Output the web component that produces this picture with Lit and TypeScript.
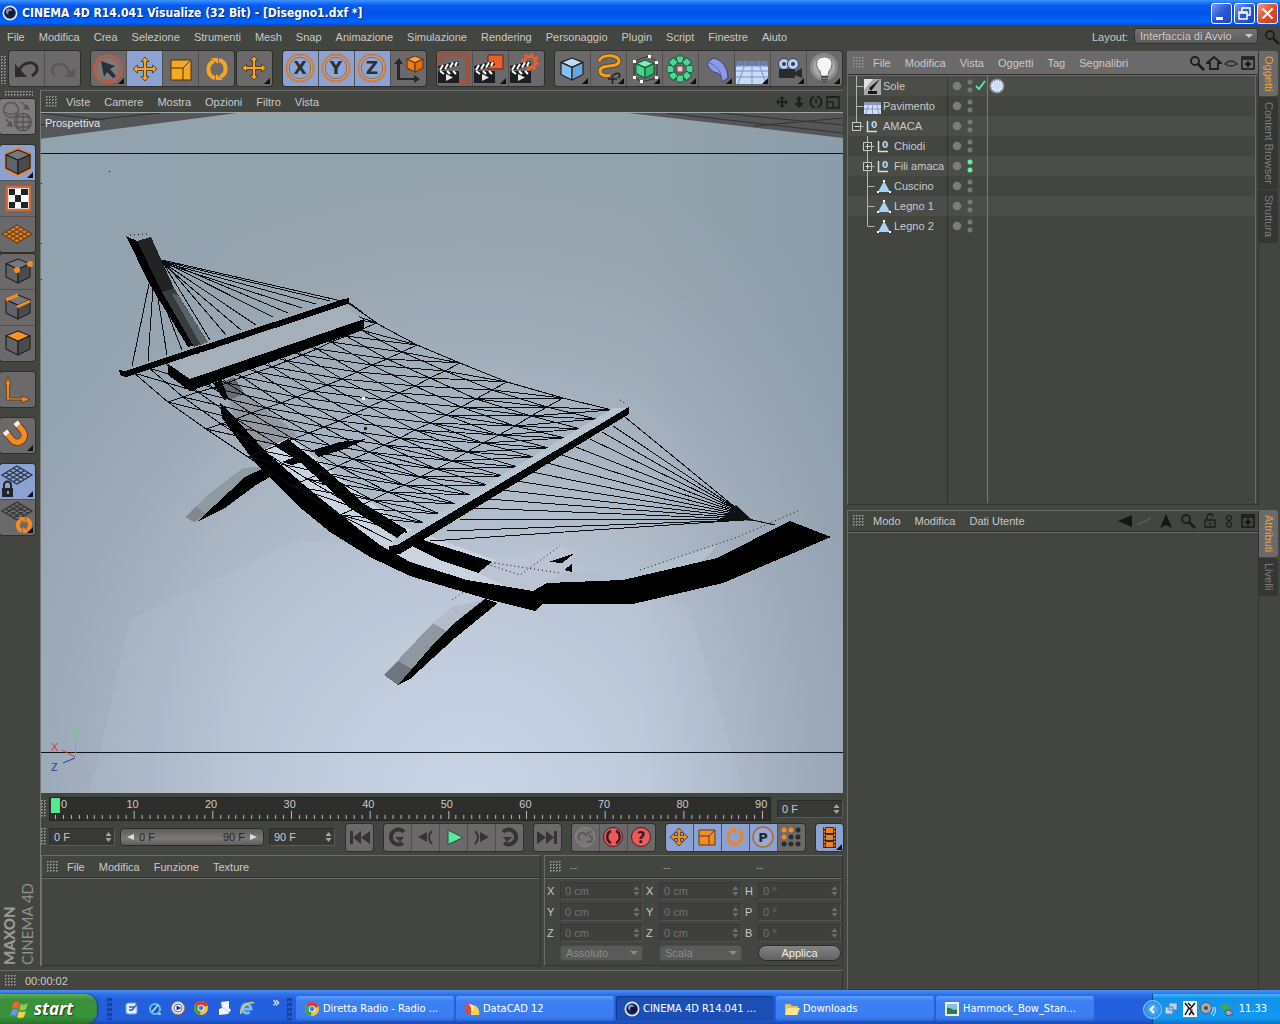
import { LitElement, html, svg, css, TemplateResult } from "lit";
import { customElement } from "lit/decorators.js";
import { classMap } from "lit/directives/class-map.js";

type Art = TemplateResult;
interface Tool { label: string; art: Art; on?: boolean; more?: boolean; }

const icon = (w: number, h: number, art: Art) =>
  html`<svg class="icon" width=${w} height=${h} viewBox="0 0 ${w} ${h}" aria-hidden="true">${art}</svg>`;

/* ---------- shared glyph parts ---------- */
const cube = (x: number, y: number, s: number, top: string, left: string, right: string, line = "#222") => svg`
  <g stroke=${line} stroke-width="1.2" stroke-linejoin="round">
    <path fill=${top} d="M${x} ${y - s}l${s} ${s * 0.4}l${-s} ${s * 0.45}l${-s} ${-s * 0.45}z"/>
    <path fill=${left} d="M${x - s} ${y - s * 0.6}l${s} ${s * 0.45}v${s * 1.15}l${-s} ${-s * 0.5}z"/>
    <path fill=${right} d="M${x + s} ${y - s * 0.6}l${-s} ${s * 0.45}v${s * 1.15}l${s} ${-s * 0.5}z"/>
  </g>`;
const cross = (c: number, r: number, fill: string) => svg`
  <path transform="translate(${c} ${c})" fill=${fill} stroke="#3a3020" stroke-width=".8"
    d="M0 ${-r}l4 4.5h-2.5v${r - 6}h${r - 6}v-2.5l4.5 4l-4.5 4v-2.5h${6 - r}v${r - 6}h2.5l-4 4.5l-4 -4.5h2.5v${6 - r}h${6 - r}v2.5l-4.5 -4l4.5 -4v2.5h${r - 6}v${6 - r}h-2.5z"/>`;
const spin = (c: number, r: number, color: string, w: number) => svg`
  <g fill="none" stroke=${color} stroke-width=${w}>
    <path d="M${c - 2} ${c + r}A${r} ${r} 0 0 1 ${c - 3} ${c - r + 1}"/>
    <path d="M${c + 2} ${c - r}A${r} ${r} 0 0 1 ${c + 3} ${c + r - 1}"/>
  </g>
  <path fill=${color} d="M${c - 6} ${c - r - 2}h7v6zM${c + 6} ${c + r + 2}h-7v-6z"/>`;
const axisRing = (t: string) => svg`
  <circle cx="17" cy="17" r="13.5" fill="#9aa9cf" stroke="#d9792a" stroke-width="2"/>
  <circle cx="17" cy="17" r="10.8" fill="#8fa5d3" stroke="#a5652f" stroke-width="1"/>
  <text x="17" y="23" text-anchor="middle" font-family="DejaVu Sans" font-weight="700" font-size="17" fill="#2b3035">${t}</text>`;
const clapper = svg`
  <path fill="#1d1d1f" d="M1 20h21v12h-21z"/>
  <path fill="#1d1d1f" d="M1 15l20 -5l1 4l-20 6z"/>
  <path stroke="#fff" stroke-width="2" d="M3 19l3 -5M8 18l3 -5M13 16.500l3 -5M18 15l2 -4M3 20l4 3M10 20l3 3M16 20l3 3"/>
  <path fill="#e8e8e8" d="M9 23l7 3.500l-7 3.500z"/>`;
const gridPlane = (y: number, color: string) => svg`
  <g stroke=${color} fill="none" stroke-width="1.300">
    <path d="M17 ${y - 9}l15 9l-15 9l-15 -9z"/>
    <path d="M13.200 ${y - 6.700}l15 9M9.500 ${y - 4.500}l15 9M5.700 ${y - 2.200}l15 9M20.700 ${y - 6.700}l-15 9M24.500 ${y - 4.500}l-15 9M28.200 ${y - 2.200}l-15 9"/>
  </g>`;
const corner = svg`<path fill="#111" d="M33 27v6h-6z"/>`;

/* ---------- tool groups ---------- */
const topGroups: { near?: boolean; tools: Tool[] }[] = [
  { tools: [
    { label: "Annulla", art: svg`<path fill="none" stroke="#2c2c2d" stroke-width="3" d="M10 20C13 10 28 9 28 18c0 3-2 5-5 7"/><path fill="#2c2c2d" d="M6 13v13h12z"/>` },
    { label: "Ripeti", art: svg`<path fill="none" stroke="#5a5858" stroke-width="2.500" d="M10 24c-5-3-4-11 5-11c6 0 8 4 9 9"/><path fill="#5a5858" d="M30 26H18l12-9z"/>` },
  ] },
  { tools: [
    { label: "Selezione", more: true, art: svg`<circle cx="17" cy="18" r="14" fill="#777475" stroke="#d0553a" stroke-width="1.500"/><circle cx="17" cy="18" r="11.500" fill="#7c797a" stroke="#c2523b"/><path fill="#2c2f35" d="M10 10l14 5l-5 3l6 7l-3 2l-6-6l-3 5z"/>` },
    { label: "Muovi", on: true, art: cross(18, 12, "#f5a623") },
    { label: "Scala", art: svg`<path fill="#f6a81f" stroke="#4b3414" d="M8 9h20v20h-20z"/><path stroke="#4b3414" fill="none" d="M8 17h12v12M20 17l7-7"/>` },
    { label: "Ruota", art: spin(18, 9, "#f5a623", 4) },
  ] },
  { near: true, tools: [{ label: "Ultimo strumento", more: true, art: cross(17, 12, "#f5a623") }] },
  { tools: [
    { label: "Blocca X", on: true, art: axisRing("X") },
    { label: "Blocca Y", on: true, art: axisRing("Y") },
    { label: "Blocca Z", on: true, art: axisRing("Z") },
    { label: "Coordinate", art: svg`<path fill="#28282a" d="M8 7l4 6h-3v14h14v-3l6 4l-6 4v-3H6V13H3z"/>${cube(24, 13, 8, "#f7a24e", "#ee7b1c", "#e06d10", "#6c3a10")}` },
  ] },
  { tools: [
    { label: "Render vista", art: svg`<path fill="none" stroke="#b04a30" stroke-width="1.500" d="M2 14V2h30v30h-9M29 5v24h-6M29 5H5v8"/>${clapper}` },
    { label: "Render immagine", more: true, art: svg`<path fill="#e8602c" stroke="#5a2a16" d="M15 4h15v14h-15z"/>${clapper}` },
    { label: "Opzioni render", art: svg`<circle cx="21" cy="11" r="5.500" fill="none" stroke="#e8602c" stroke-width="3"/><circle cx="21" cy="11" r="7.500" fill="none" stroke="#e8602c" stroke-width="3" stroke-dasharray="3 2.890"/>${clapper}` },
  ] },
  { tools: [
    { label: "Cubo", more: true, art: cube(17, 18, 11, "#b9dcfb", "#86c0f2", "#68a5dd") },
    { label: "Spline", more: true, art: svg`<path fill="none" stroke="#5a3a10" stroke-width="4.500" d="M8 10c4-8 20-6 20 0c0 8-19 2-19 10c0 4 6 6 10 4"/><path fill="none" stroke="#f2a020" stroke-width="3" d="M8 10c4-8 20-6 20 0c0 8-19 2-19 10c0 4 6 6 10 4"/><path fill="none" stroke="#222" stroke-width="1.500" d="M17 28h9M21.500 24v9M22 24c6-4 9 0 5 3"/>` },
    { label: "NURBS", more: true, art: svg`<path fill="none" stroke="#333" d="M7 10l15-5l8 6v16l-16 4l-7-6z"/>${cube(18, 18, 9, "#7cf0b4", "#46d78c", "#37be78", "#1e5c3c")}<path fill="#fff" d="M6 9h3v3h-3zM21 4h3v3h-3zM28 10h3v3h-3zM6 25h3v3h-3zM13 29h3v3h-3zM28 25h3v3h-3z"/>` },
    { label: "Array", more: true, art: svg`<g fill="#4fd592" stroke="#1e5c3c">${[0, 45, 90, 135, 180, 225, 270, 315].map(a => svg`<rect transform="rotate(${a} 17 18)" x="13.500" y="5" width="7" height="7" rx="1.500"/>`)}</g><rect x="14" y="15" width="6" height="6" fill="#e6c9c5" stroke="#644"/>` },
    { label: "Deformatori", more: true, art: svg`<path fill="#8f98e8" stroke="#3b3f70" d="M8 12l6-5c8 1 15 9 15 20l-6 4c0-5-2-8-5-9c-5-1-9-5-10-10z"/><path fill="none" stroke="#5c62a8" d="M8 12c8 0 15 8 15 19"/>` },
    { label: "Ambiente", more: true, art: svg`<path fill="#6a7aa5" d="M1 10h32v6H1z"/><path fill="#c9dbfa" d="M1 15h32v18H1z"/><path stroke="#7f93bd" d="M17 10v23M11 10L3 33M23 10l8 23M6 10L1 16M28 10l5 6M1 15h32M1 20h32M1 26h32"/>` },
    { label: "Camera", more: true, art: svg`<circle cx="13" cy="13" r="5.500" fill="#b9cef6" stroke="#333b52"/><circle cx="22" cy="13" r="5.500" fill="#b9cef6" stroke="#333b52"/><circle cx="13" cy="13" r="2" fill="#333b52"/><circle cx="22" cy="13" r="2" fill="#333b52"/><path fill="#2a2a2c" d="M8 18h16v3l7-4v10l-7-3v3H8z"/>` },
    { label: "Luce", more: true, art: svg`<circle cx="17" cy="16" r="14" fill="#8a8888"/><circle cx="17" cy="16" r="11" fill="#a8a6a6"/><path fill="#f6f6f6" stroke="#555" stroke-width=".800" d="M17 6c10 0 9 10 5 14l-1 5h-7l-1-5c-5-4-5-14 4-14z"/><path fill="#4c4c4c" d="M14 25h7v2h-7zM14 28h7v1.500h-7zM15.500 30h4v1.500h-4z"/>` },
  ] },
];

const solid: [string, string, string] = ["#76777a", "#626366", "#4a4b4e"];
const leftGroups: { near?: boolean; tools: Tool[] }[] = [
  { tools: [{ label: "Rendi modificabile", art: svg`<path fill="#7d7b7c" d="M0 0h35v35H0z"/><g fill="none" stroke="#555454" stroke-width="1.300"><circle cx="11" cy="11" r="7.500"/><path d="M4 13c5 3 10 3 14 0M21 3l7 6M6 20l5 6"/><circle cx="23" cy="23" r="8.500"/><path d="M15 23h17M23 15v17M16 18h14M16 28h14M19 16c-3 4-3 10 0 14M27 16c3 4 3 10 0 14"/></g><path fill="#555454" d="M30 11l-7-1l4-5zM13 28l-7-1l5-5z"/>` }] },
  { tools: [
    { label: "Modello", on: true, more: true, art: svg`<path fill="none" stroke="#e8842a" stroke-width="3" d="M18 4l12 5v15l-12 6l-12-6V9z"/>${cube(18, 17, 12, ...solid)}` },
    { label: "Texture", art: svg`<path fill="#d7d7d7" stroke="#d9692a" stroke-width="2" d="M7 6h23v23H7z"/><path fill="#222" d="M9 8h6v6H9zM21 8h7v6h-7zM15 14h6v7h-6zM9 21h6v6H9zM21 21h7v6h-7z"/><path fill="#fff" d="M15 8h6v6h-6zM9 14h6v7H9zM21 14h7v7h-7zM15 21h6v6h-6z"/>` },
    { label: "Piano di lavoro", art: svg`<path fill="#e0812a" d="M17 8l15 9l-15 9l-15-9z"/>${gridPlane(17, "#6e3f16")}` },
  ] },
  { near: true, tools: [
    { label: "Punti", art: svg`${cube(18, 17, 12, ...solid)}<circle cx="17" cy="16" r="3" fill="#f28c26"/><circle cx="30" cy="10" r="3" fill="#f28c26"/>` },
    { label: "Bordi", art: svg`${cube(18, 17, 12, ...solid)}<path stroke="#f28c26" stroke-width="3" d="M6 10l12-5M17 17l13-6"/>` },
    { label: "Poligoni", art: cube(18, 17, 12, "#fb9224", solid[1], solid[2]) },
  ] },
  { tools: [{ label: "Assi", art: svg`<path fill="#ea8a2c" stroke="#5e3a18" stroke-width=".800" d="M8 5l3 8H9.500v13H22v-2l8 3l-8 4v-3H6.500V13H5z"/>` }] },
  { tools: [{ label: "Snap", more: true, art: svg`<g fill="none" transform="rotate(-40 18 18)"><path stroke="#5e3515" stroke-width="7" d="M11 8v9a7 7 0 0 0 14 0V8"/><path stroke="#f28c26" stroke-width="5.500" d="M11 8v9a7 7 0 0 0 14 0V8"/><path stroke="#f2f2f2" stroke-width="5.500" d="M11 6v4M25 6v4"/></g>` }] },
  { tools: [
    { label: "Blocca piano", on: true, more: true, art: svg`${gridPlane(11, "#2b3346")}<path fill="#20242c" d="M2 24h11v9H2z"/><path fill="none" stroke="#20242c" stroke-width="2" d="M4 24v-3a3.500 3.500 0 0 1 7 0v3"/><path fill="#8fa5d3" d="M7 27h2v3h-2z"/>` },
    { label: "Piano automatico", more: true, art: svg`${gridPlane(11, "#333")}<g transform="translate(6 7)">${spin(18, 6, "#f28c26", 4)}</g>` },
  ] },
];

const keyBack = svg`<path fill="#343435" d="M4 7h3v13H4zM15 7v13L7 13.500zM24 7v13l-9-6.500z"/>`;
const keyNext = svg`<path fill="#343435" d="M23 7h-3v13h3zM12 7v13l8-6.500zM3 7v13l9-6.500z"/>`;
const playGroups: Tool[][] = [
  [{ label: "Vai all'inizio", art: keyBack }],
  [
    { label: "Chiave precedente", art: svg`<path fill="none" stroke="#343435" stroke-width="4" d="M20 8a7.500 7.500 0 1 0-1 11"/><path fill="#343435" d="M11 13h9l-4 5z"/>` },
    { label: "Fotogramma precedente", art: svg`<path fill="#343435" d="M6 13l9-5v10z"/><path fill="none" stroke="#343435" stroke-width="2" d="M20 7c-4 4-4 9 0 13"/>` },
    { label: "Riproduci", art: svg`<path fill="#56eb9c" stroke="#2a4a38" d="M8 6l15 7.500l-15 7z"/>` },
    { label: "Fotogramma successivo", art: svg`<path fill="#343435" d="M21 13l-9-5v10z"/><path fill="none" stroke="#343435" stroke-width="2" d="M7 7c4 4 4 9 0 13"/>` },
    { label: "Chiave successiva", art: svg`<path fill="none" stroke="#343435" stroke-width="4" d="M7 8a7.500 7.500 0 1 1 1 11"/><path fill="#343435" d="M16 13H7l4 5z"/>` },
  ],
  [{ label: "Vai alla fine", art: keyNext }],
  [
    { label: "Registra", art: svg`<circle cx="13" cy="13" r="9.500" fill="#777576" stroke="#8c8a8a"/><path fill="none" stroke="#5b595a" stroke-width="2" d="M8 16a4 4 0 1 1 6-5l5-4M15 17a3 3 0 1 0 2-5"/>` },
    { label: "Autokey", art: svg`<circle cx="13" cy="13" r="9.500" fill="#ee5a5c" stroke="#3a2222"/><path fill="none" stroke="#3a1a1c" stroke-width="2.500" d="M11 7c-5 2-5 10 0 12M16 7c5 2 5 10 0 12"/>` },
    { label: "Aiuto chiavi", art: svg`<circle cx="13" cy="13" r="9.500" fill="#ee5a5c" stroke="#3a2222"/><text x="13" y="19" text-anchor="middle" font-family="DejaVu Sans" font-weight="700" font-size="15" fill="#3a1a1c">?</text>` },
  ],
  [
    { label: "Posizione", on: true, art: cross(13, 9, "#f28c26") },
    { label: "Scala chiave", on: true, art: svg`<path fill="#f28c26" stroke="#5e3a18" d="M5 6h16v15H5z"/><path fill="none" stroke="#5e3a18" d="M5 12h10v9M15 12l6-6"/>` },
    { label: "Rotazione", on: true, art: spin(13, 7, "#e8852c", 3) },
    { label: "Parametro", on: true, art: svg`<circle cx="13" cy="13" r="10" fill="#9aa9cf" stroke="#b0692f" stroke-width="1.500"/><text x="13" y="18" text-anchor="middle" font-family="DejaVu Sans" font-weight="700" font-size="13" fill="#23262c">P</text>` },
    { label: "Punti chiave", art: svg`${[5, 12, 19].map((y, r) => [5, 12, 19].map((x, c) => svg`<circle cx=${x + 1} cy=${y + 1} r="2.500" fill=${r + c < 2 ? "#f28c26" : "#2c2c2d"}/>`))}` },
  ],
];
const film: Tool = { label: "Anteprima", on: true, art: svg`<path fill="#3a2a1c" d="M7 3h13v21H7z"/><path fill="#e8852c" d="M10 4h7v5h-7zM10 11h7v5h-7zM10 18h7v5h-7z"/><path stroke="#e8852c" stroke-width="1.500" stroke-dasharray="2 1.500" d="M8.500 3v21M18.500 3v21"/><path fill="#111" d="M26 20v6h-6z"/>` };

/* ---------- small header glyphs, 16 x 16 ---------- */
const lens = svg`<circle cx="6" cy="6" r="4" fill="none" stroke="#1d1d1d" stroke-width="1.800"/><path stroke="#1d1d1d" stroke-width="2.500" d="M9 9l6 6"/>`;
const house = svg`<path fill="none" stroke="#1d1d1d" stroke-width="1.800" d="M1 8l7-6l7 6h-3v6H4V8z"/>`;
const eye = svg`<path fill="none" stroke="#2a2a2a" stroke-width="1.300" d="M2 9q6-6 12 0q-6 4-12 0z"/>`;
const plusBox = svg`<path fill="none" stroke="#161616" stroke-width="1.400" d="M2 2h12v12H2zM2 4h12"/><path stroke="#161616" stroke-width="2" d="M8 6v6M5 9h6"/>`;
const viewGlyphs: [string, Art][] = [
  ["Sposta vista", svg`<path fill="#1f1f1f" d="M8 2l3 3H9v2h2V5l3 3l-3 3V9H9v2h2l-3 3l-3-3h2V9H5v2L2 8l3-3v2h2V5H5z"/>`],
  ["Zoom vista", svg`<path fill="#1f1f1f" d="M8 2l3 3H9.500v4H13l-5 5l-5-5h3.500V5H5z"/>`],
  ["Ruota vista", svg`<path fill="none" stroke="#1f1f1f" stroke-width="2" d="M7 13.500a5.500 5.500 0 0 1-1-10.500M9 2.500a5.500 5.500 0 0 1 1 10.500M8 5v4"/>`],
  ["Affianca viste", svg`<path fill="none" stroke="#1f1f1f" stroke-width="1.500" d="M2 3h12v11H2zM2 8h6v6"/><path stroke="#1f1f1f" stroke-width="2" d="M2 3h12"/>`],
];

/* ---------- hammock geometry ---------- */
type Pt = [number, number];
const farEdge: Pt[] = [[350, 303], [376, 323], [417, 345], [460, 363], [507, 382], [563, 398], [612, 410]];
const nearEdge: Pt[] = [[134, 373], [168, 402], [206, 429], [248, 457], [292, 486], [340, 515], [393, 542]];
const STRANDS = 14;
const knot = (i: number, j: number): Pt => {
  const t = j / STRANDS, sag = Math.sin(Math.PI * t) * (i > 0 && i < 6 ? 4 : 0);
  return [nearEdge[i][0] + (farEdge[i][0] - nearEdge[i][0]) * t,
    nearEdge[i][1] + (farEdge[i][1] - nearEdge[i][1]) * t + sag];
};
const seg = (a: Pt, b: Pt) => `M${Math.round(a[0])} ${Math.round(a[1])}L${Math.round(b[0])} ${Math.round(b[1])}`;
const netPath = (() => {
  const out: string[] = [];
  for (let i = 0; i < 7; i++) for (let j = 0; j <= STRANDS; j++) {
    if (i > 0 && i < 6 && j < STRANDS) out.push(seg(knot(i, j), knot(i, j + 1)));
    if (i < 6) {
      out.push(seg(knot(i, j), knot(i + 1, j)));
      out.push(seg(knot(i, j), knot(i + 1, Math.min(j + 2, STRANDS))));
      if (i > 3) out.push(seg(knot(i, j), knot(i + 1, Math.min(j + 1, STRANDS))));
    }
  }
  return out.join("");
})();
const rightFan = ([[625, 417], [613, 426], [602, 432], [590, 439], [576, 447], [562, 455], [547, 463], [532, 472], [516, 481], [501, 490], [487, 499], [474, 508], [460, 519], [447, 531], [430, 541]] as Pt[])
  .map((p, i) => seg(p, [736 + (i < 8 ? i : 8), 508 + Math.min(i, 12)])).join("");
const leftFan = ([[346, 302], [330, 301], [316, 304], [302, 308], [288, 313], [273, 317], [256, 325], [241, 330], [226, 335], [210, 340]] as Pt[])
  .map((p, i) => seg([162, 260 + (i % 4)], p)).join("")
  + ([[132, 366], [148, 361], [167, 355], [182, 350]] as Pt[]).map((p, i) => seg([149 + i * 4, 284 + i * 4], p)).join("");

const scene = svg`
  <defs>
    <radialGradient id="glow" gradientUnits="userSpaceOnUse" cx="470" cy="800" r="640">
      <stop offset="0" stop-color="#c8d5e6"/><stop offset=".25" stop-color="#bfcbdb"/>
      <stop offset=".5" stop-color="#afbac9"/><stop offset=".72" stop-color="#a1acb9"/>
      <stop offset=".88" stop-color="#97a5b0"/><stop offset="1" stop-color="#93a3ad"/>
    </radialGradient>
    <linearGradient id="edge" x1="0" x2="1" y1="0" y2="0">
      <stop offset="0" stop-color="#8fa0b4" stop-opacity=".35"/><stop offset=".25" stop-color="#8fa0b4" stop-opacity="0"/>
      <stop offset=".75" stop-color="#8496a6" stop-opacity="0"/><stop offset="1" stop-color="#8496a6" stop-opacity=".45"/>
    </linearGradient>
  </defs>
  <path fill="url(#glow)" d="M-400 -200h1700v1400h-1700z"/>
  <path fill="url(#edge)" d="M40 113h803v681H40z"/>
  <g fill="#c9d4e6" opacity=".12">
    <path d="M280 794L340 690L440 660L560 680L640 794z"/><path d="M350 794L420 700L520 690L600 794z"/>
    <path d="M150 794L190 650L330 600L520 600L650 640L690 794z"/><path d="M90 794L130 620L300 540L560 560L690 610L745 794z"/>
  </g>
  <g fill="#555657">
    <path d="M40 113h197L40 139z"/><path d="M628 113h215v25z"/>
    <path stroke="#333" fill="none" d="M105 120l-65-7M40 125l120-12M666 113l177 20M720 113l123 12M843 118l-90 8"/>
  </g>
  <path stroke="#0c1418" class="crisp" d="M40 153.500h803M40 752.500h803"/>
  <path fill="#111" d="M109 171h1v1h-1zM41 183h1v1h-1zM41 243h1v1h-1zM41 279h1v1h-1z"/>

  <g class="crisp">
    <path fill="#8f9aa3" d="M185 517L210 493L243 468L272 466L197 522z"/><path fill="#84868c" d="M185 517L196 507L206 514L194 522z"/>
    <path fill="#000" d="M197 522L215 505L245 477L266 467L277 473L256 485L225 508z"/>
    <path fill="#000" d="M126 236L137 241L168 292L196 345L188 347L150 285z"/>
    <path fill="#222325" d="M137 241L151 237L161 259L174 288L162 292z"/>
    <path fill="#373c40" d="M162 292L174 288L208 342L194 347z"/><path fill="#5b6167" d="M178 295L208 342L201 345L172 294z"/>
    <path fill="#000" d="M213 383L222 380L230 398L224 400z"/><path fill="#666a73" d="M222 382L234 377L245 394L229 400z"/>
    <path fill="#8d9199" opacity=".8" d="M229 400L245 394L285 424L298 436L263 450L233 415z"/>
    <path fill="#ccd3e0" d="M263 450L290 437L330 470L400 525L500 562L560 572L547 584L533 592L467 581L400 558L330 512z"/>
    <path fill="#000" d="M275 446L288 439L323 467L363 503L407 530L397 538L350 508L300 462z"/>
    <path fill="#000" d="M313 450L340 442L366 439L345 449L318 457z"/><path fill="#000" d="M282 462L300 455L303 462L292 465z"/>
    <path fill="#000" d="M412 546L423 540L493 562L478 573L440 560z"/>
    <path fill="#bcc3d2" d="M478 573L493 561L515 557L560 546L576 553L566 568L572 574L555 580L547 584L533 592L505 586z"/>
    <path fill="#000" d="M549 562L575 553L562 563zM564 570L572 564V572z"/>
    <path fill="#b2bfcc" d="M547 583L565 573L635 570L717 545L700 562L623 580z"/>
    <path fill="#000" d="M220 402L237 420L267 453L310 490L360 530L380 545L410 562L467 580L533 591L547 583L623 580L717 558L790 521L831 537L723 583L633 604L543 604L535 611L487 599L410 576L370 557L330 532L297 505L253 460L222 418z"/>
    <path fill="#8f97a1" d="M384 675L433 623L452 607L483 600L465 620L398 685z"/>
    <path fill="#b4bcca" d="M433 623L452 607L483 600L462 616L448 632z"/><path fill="#6f7680" d="M384 675L398 661L412 669L398 685z"/>
    <path fill="#000" d="M398 685L430 648L452 625L485 599L498 603L455 638L410 679z"/>
  </g>
  <path class="crisp" stroke="#0c0e11" fill="none" d=${netPath}/>
  <path class="crisp" stroke="#0c0e11" fill="none" d="${leftFan}${rightFan}M748 519L775 525M348 303L377 323"/>
  <path fill="#101114" d="M736 505L753 521L722 518z"/>
  <g class="crisp">
    <path fill="#a6b0bc" d="M168 364L343 305L364 320L190 380z"/>
    <path fill="#000" d="M168 364L190 379L364 319V329L190 391L168 375z"/>
    <path fill="#000" d="M119 370L125 371L344 299L349 298V303L345 305L126 377L121 376z"/>
    <path fill="#b9c4d1" d="M391 542L613 408L626 408L397 546z"/>
    <path fill="#000" d="M389 546L397 545L629 407V414L400 554H390z"/>
  </g>
  <path fill="none" stroke="#111" stroke-dasharray="1 3" d="M130 235l18-1M640 570L735 538L800 510M455 557L560 573M430 545L520 575L560 546M452 600l15-10M620 400l6 4"/>
  <path fill="#fff" d="M362 397h3v3h-3z"/><path fill="#222" d="M364 427h3v3h-3z"/>
  <g fill="none"><path stroke="#3fd86a" d="M75.500 757V740"/><path stroke="#d8364c" d="M75 757l-13-7"/><path stroke="#3038b8" d="M75 758l-12 5"/></g>
  <g font-family="Liberation Sans" font-size="11"><text x="51" y="751" fill="#d8364c">X</text><text x="71" y="738" fill="#58d870">Y</text><text x="51" y="771" fill="#3038b8">Z</text></g>
  <text x="45" y="127" font-family="Liberation Sans" font-size="11" fill="#e6e6e6">Prospettiva</text>`;

/* ---------- object tree ---------- */
const nullGlyph = svg`<path fill="none" stroke="#ddd" stroke-width="1.500" d="M3.500 3v10.500H13"/><text x="7" y="10" font-family="DejaVu Sans" font-size="9" font-weight="700" fill="#b9d6f5">0</text>`;
const meshGlyph = svg`<path fill="#a5d2f7" d="M9 3l6 11H3z"/><path fill="#fff" d="M8 2h2v2H8zM2 13h2v2H2zM14 13h2v2h-2z"/>`;
const rows: { name: string; depth: number; glyph: Art; box?: string; check?: boolean; green?: boolean; last?: boolean }[] = [
  { name: "Sole", depth: 0, check: true, glyph: svg`<path fill="#a8a8a8" d="M0 1h17v16H0z"/><path fill="#e4e4e4" d="M0 1h9L0 12z"/><path fill="#161616" d="M16 1L7 13L5 10zM4 13h9v3H4z"/>` },
  { name: "Pavimento", depth: 0, glyph: svg`<path fill="#8595b8" d="M0 4h17v4H0z"/><path fill="#cfdef9" d="M0 7h17v9H0z"/><path stroke="#8a9cc4" d="M8.500 4v12M5 4L2 16M12 4l3 12M0 11h17"/>` },
  { name: "AMACA", depth: 0, glyph: nullGlyph, box: "−" },
  { name: "Chiodi", depth: 1, glyph: nullGlyph, box: "+" },
  { name: "Fili amaca", depth: 1, glyph: nullGlyph, box: "+", green: true },
  { name: "Cuscino", depth: 1, glyph: meshGlyph },
  { name: "Legno 1", depth: 1, glyph: meshGlyph },
  { name: "Legno 2", depth: 1, glyph: meshGlyph, last: true },
];
const branch = (r: (typeof rows)[number]) => {
  const x = r.depth ? 19.5 : 8.5;
  return svg`<path fill="none" stroke="#b4b4b2" d="M${x} 0V${r.last || (r.depth === 0 && r.box) ? 10 : 20}M${x} 10.500h7"/>
    ${r.box ? svg`<rect x=${x - 4} y="6.500" width="8" height="8" fill="#434541" stroke="#c8c8c6"/><path stroke="#ddd" d="M${x - 2} 10.500h5"/>${r.box === "+" ? svg`<path stroke="#ddd" d="M${x} 8v5"/>` : null}` : null}`;
};

/* ---------- desktop glyphs, 16 x 16 ---------- */
const c4d = svg`<circle cx="8" cy="8" r="7.500" fill="#dfe5f0"/><circle cx="8" cy="8" r="5.800" fill="#16204a"/><circle cx="7" cy="6.500" r="3" fill="#7f93cc"/><circle cx="8.500" cy="8" r="2.300" fill="#0c1230"/>`;
const chrome = svg`<circle cx="8" cy="8" r="7" fill="#f3c72c"/><path fill="#dd3b2b" d="M8 8L2 4.500a7 7 0 0 1 12.500 1z"/><path fill="#39a34a" d="M8 8l-1 7A7 7 0 0 1 2 4.500z"/><circle cx="8" cy="8" r="3.200" fill="#fff"/><circle cx="8" cy="8" r="2.400" fill="#3f7fe0"/>`;
const quick: [string, Art][] = [
  ["Mostra desktop", svg`<rect x="2" y="3" width="11" height="11" rx="2" fill="#dfeefc" stroke="#6aa7e6"/><path stroke="#2f62b5" stroke-width="1.500" fill="none" d="M5 7h5M5 10h4M8 10l7-8"/>`],
  ["Ricerca", svg`<circle cx="8" cy="9" r="5" fill="#1f55c8" stroke="#5cc2f8" stroke-width="2"/><path stroke="#bfe6ff" stroke-width="1.500" d="M5 12l6-7M11 14h3"/>`],
  ["Lettore multimediale", svg`<circle cx="8" cy="8" r="6.500" fill="#e8eef8" stroke="#d07a3c"/><circle cx="8" cy="8" r="4" fill="#fff" stroke="#4a78d0"/><path fill="#1c3f90" d="M6.500 5.500l5 2.500l-5 2.500z"/>`],
  ["Chrome", chrome],
  ["Note", svg`<path fill="#f6f8ff" d="M5 2l8-1v7l2 2l-3 4l-9 1V9l3-1z"/><path stroke="#b8c8e8" fill="none" d="M6 7l6 5"/>`],
  ["Explorer", svg`<path fill="none" stroke="#6fc0fb" stroke-width="3" d="M4 9h8a4.500 4.500 0 1 0-1.500 3"/><path fill="none" stroke="#f4c94a" stroke-width="1.500" d="M2 14C0 9 10 1 15 3"/>`],
];
const tasks: { name: string; art: Art; on?: boolean }[] = [
  { name: "Diretta Radio - Radio ...", art: chrome },
  { name: "DataCAD 12", art: svg`<path fill="#e24a33" d="M1 3h8v10H1z"/><path fill="#f3d34a" d="M7 4c7 0 9 5 8 10H7z"/><path fill="#f8f4e4" d="M5 3c5 0 6 4 4 8z"/>` },
  { name: "CINEMA 4D R14.041 ...", art: c4d, on: true },
  { name: "Downloads", art: svg`<path fill="#e9c24c" d="M1 3h5l2 2h6v9H1z"/><path fill="#fbe68c" d="M3 7h13l-3 7H1z"/>` },
  { name: "Hammock_Bow_Stan...", art: svg`<path fill="#f2eed8" d="M1 1h14v14H1z"/><path fill="#7cc4ee" d="M3 3h10v5H3z"/><path fill="#2c7a46" d="M3 7c3-1 5 3 10 1v5H3z"/>` },
];

@customElement("app-root")
export class AppRoot extends LitElement {
  static styles = css`
    :host { display: flex; flex-direction: column; min-height: 100vh; background: #434541; color: #c9c9c7;
      font: 11px/14px "Liberation Sans", Arial, sans-serif; }
    * { box-sizing: border-box; }
    svg { display: block; flex: none; }
    button, input, select { font: inherit; color: inherit; margin: 0; padding: 0; border: 0; background: none; border-radius: 0; }
    button { display: flex; align-items: center; justify-content: center; cursor: pointer; }
    .crisp { shape-rendering: crispEdges; }

    .title { display: flex; align-items: center; height: 26px; padding: 0 2px 0 2px; gap: 4px;
      background: linear-gradient(#3b95ff, #0a5af0 20%, #0053e4 50%, #0064ff 85%, #0048cc); color: #fff; }
    .title h1 { flex: 1; margin: 0; font: 700 12px/20px "DejaVu Sans Condensed", "DejaVu Sans", sans-serif; text-shadow: 1px 1px 1px #0a2a80; }
    .win { width: 21px; height: 21px; border: 1px solid #fff; border-radius: 3px; background: linear-gradient(135deg, #7b9df0, #2a57d8 50%, #1f46be); }
    .win.close { background: linear-gradient(135deg, #f0a080, #e0502c 50%, #c03c18); }
    .wins { display: flex; gap: 2px; }

    .menubar { display: flex; align-items: center; height: 25px; padding: 0 0 3px 7px; }
    .menus { display: flex; gap: 14px; flex: 1; }
    .layout { display: flex; align-items: center; gap: 6px; }
    .layout .pick { margin-top: -2px; }
    .layout select { width: 124px; height: 16px; padding: 0 5px; }
    .pick { position: relative; display: flex; }
    .pick select { appearance: none; border-radius: 3px; background: linear-gradient(#737171, #5c5a5a); border: 1px solid #333; }
    .pick::after { content: ""; position: absolute; right: 5px; top: 6px; border: 4px solid transparent; border-top-color: #c9c9c7; pointer-events: none; }

    .work { flex: 1; display: grid; grid-template-columns: minmax(0, 1fr) 433px; gap: 4px; }
    .left { display: flex; flex-direction: column; min-width: 0; }
    .toolbar { display: flex; height: 39px; gap: 11px; }
    .toolbar .grip { margin: 5px -8px 0 1px; }
    .toolbar .near { margin-left: -8px; }
    .group { display: flex; gap: 1px; height: 35px; background: #525151; border-radius: 3px; box-shadow: 0 0 0 1px #2f302e; overflow: hidden; }
    .group button { width: 35px; height: 35px; background: #6b696a; }
    .group button.on { background: #8ba2d3; }
    .group.small { height: 27px; }
    .small button { width: 27px; height: 27px; }
    .grip { flex: none; width: 12px; height: 12px; background: linear-gradient(135deg, #8b8c89 50%, transparent 50%) 0 0 / 3px 3px; }
    .grip.tall { width: 5px; height: 28px; }
    .grip.mid { width: 5px; height: 18px; }
    .grip.wide { width: 28px; height: 5px; }

    .stage { flex: 1; display: grid; grid-template-columns: 40px minmax(0, 1fr); padding-bottom: 4px; }
    .rail { display: flex; flex-direction: column; align-items: flex-start; gap: 11px; padding: 1px 0 1px 0; }
    .rail .wide { margin: 0 0 -8px 5px; }
    .rail .group { flex-direction: column; height: auto; width: 35px; }
    .rail .near { margin-top: -9px; }
    .brand { writing-mode: vertical-rl; transform: rotate(180deg); margin-top: auto; color: #8f908e; font: 15px/18px Lato, "Liberation Sans", sans-serif; }
    .brand b { font-weight: 900; color: #999a98; display: block; }
    .brand span { display: block; }

    .center { display: flex; flex-direction: column; min-width: 0; border-left: 1px solid #777875; }
    .head { display: flex; align-items: center; height: 22px; gap: 14px; padding: 0 2px 0 5px; border-top: 1px solid #6b6c69; }
    .head .grip { margin-right: -6px; }
    .head .menus { flex: 1; }
    .tools { display: flex; gap: 1px; }
    .view { flex: 1; display: flex; border-top: 1px solid #9ea6a8; min-height: 400px; }
    .view svg { width: 100%; height: auto; flex: 1; }
    .line { display: flex; align-items: center; gap: 3px; }
    .time { height: 30px; padding-top: 1px; }
    .ruler { flex: 1; min-width: 0; background: #2d2e2c; border: 1px solid #252524; }
    .ruler svg { width: 100%; height: 22px; }
    .field { display: flex; align-items: center; width: 66px; height: 18px; padding: 0 2px 0 4px; background: #383937; border: 1px solid #2b2c2a; border-right-color: #5a5b58; border-bottom-color: #5a5b58; }
    .field input { flex: 1; width: 0; min-width: 0; outline: 0; }
    .play { height: 32px; padding-bottom: 4px; gap: 11px; }
    .play .line { gap: 5px; }
    .play .line .grip { margin-right: -2px; }
    .range { display: flex; align-items: center; justify-content: space-between; width: 144px; height: 18px; padding: 0 6px; border-radius: 4px; border: 1px solid #2b2c2a; background: linear-gradient(#5c5c5b, #7b7978 60%, #5c5c5b); color: #262626; }
    .range span { display: flex; align-items: center; gap: 4px; }
    .push { margin-left: auto; }

    .lower { display: grid; grid-template-columns: minmax(0, 1fr) 299px; gap: 3px; height: 111px; }
    .panel { display: flex; flex-direction: column; border: 1px solid #6b6c69; border-color: #6b6c69 #333 #333 #6b6c69; min-width: 0; }
    .panel .head { border-top: 0; border-bottom: 1px solid #2f302e; box-shadow: 0 1px #6b6c69; }
    .dashes { display: grid; grid-template-columns: repeat(3, 93px); color: #999; }
    .coords { display: grid; grid-template-columns: 10px 83px 10px 83px 10px 83px; gap: 3px 3px; padding: 4px 3px 0 2px; align-items: center; }
    .coords .field { width: auto; background: #3f403e; border-color: #383937 #51524f #51524f #383937; color: #71726f; }
    .coords select { width: 83px; height: 16px; padding: 0 5px; color: #8d8d8b; background: #5a5a58; border-color: #4a4b48; opacity: 1; }
    .coords .pick::after { border-top-color: #8d8d8b; }
    .apply { height: 16px; border-radius: 8px; border: 1px solid #2b2c2a; background: linear-gradient(#848282, #636161); color: #eee; }
    .status { display: flex; align-items: center; gap: 8px; height: 20px; padding-left: 5px; border-top: 1px solid #6b6c69; border-right: 1px solid #333; }

    .right { display: flex; flex-direction: column; gap: 5px; min-width: 0; }
    .dock { display: grid; grid-template-columns: minmax(0, 1fr) 21px; min-height: 0; }
    .dock.objects { flex: 454 1 0; }
    .dock.attributes { flex: 480 1 0; }
    .objects .head { background: #6b696a; height: 23px; }
    .attributes .tools { gap: 3px; }
    .attributes .head { height: 21px; }
    .tabs { display: flex; flex-direction: column; gap: 1px; align-items: flex-start; }
    .tab { writing-mode: vertical-rl; width: 19px; padding: 5px 0; border-radius: 0 3px 3px 0; background: #353634; color: #7d7e7b; justify-content: flex-start; min-height: 38px; }
    .tab.on { background: #6b696a; color: #f0a32c; }
    .tree { flex: 1; display: flex; margin: 1px 2px 1px 0; border-right: 1px solid #6b6c69;
      background: linear-gradient(#2f302e, #2f302e) 99px 0 / 1px 100% no-repeat, linear-gradient(#777875, #777875) 139px 0 / 1px 100% no-repeat; }
    table { width: 100%; height: 160px; border-collapse: collapse; table-layout: fixed; }
    td { height: 20px; padding: 0; }
    tr:nth-child(odd) { background: rgba(255, 255, 255, 0.045); }
    .c1 { width: 99px; } .c2 { width: 40px; }
    .node { display: flex; align-items: center; height: 20px; white-space: nowrap; }
    .node .name { padding-left: 2px; }
    .dots { display: flex; align-items: center; height: 20px; }

    .taskbar { display: flex; align-items: center; height: 34px; color: #fff; font: 11px/14px "DejaVu Sans Condensed", "DejaVu Sans", sans-serif;
      background: linear-gradient(#4a90f5, #2f72ea 12%, #245edb 30%, #2360de 85%, #1a48b0); }
    .start { width: 97px; height: 30px; margin-top: 4px; padding-right: 14px; gap: 4px; border-radius: 0 12px 12px 0; background: linear-gradient(#5eac56, #3c8f3a 20%, #37943a 75%, #2a6f2c); box-shadow: 1px 0 2px #123a80;
      font: italic 700 17px/20px "Open Sans", sans-serif; text-shadow: 1px 1px 2px #143c14; }
    .sep { flex: none; width: 5px; height: 22px; margin-top: 4px; background: linear-gradient(135deg, #16419f 60%, transparent 60%) 0 0 / 3px 5px; }
    .start + .sep { margin-left: 10px; }
    .quick { display: flex; gap: 7px; padding: 2px 15px 0 6px; }
    .quick { margin-left: 6px; }
    .more { width: 12px; margin: -10px 5px 0 0; font-size: 14px; }
    .tasks { flex: 1; display: flex; gap: 2px; min-width: 0; padding: 5px 58px 3px 4px; }
    .task { flex: 1; min-width: 0; height: 25px; padding: 2px 8px 0; gap: 3px; justify-content: flex-start; border-radius: 3px; background: linear-gradient(#5e9dfb, #3c81f3 20%, #3a7cf0 85%, #2c66d4); white-space: nowrap; overflow: hidden; }
    .task.on { background: #1c4fb5; box-shadow: inset 1px 1px 1px #133a8c; }
    .tray { position: relative; display: flex; align-items: center; gap: 2px; width: 128px; height: 30px; margin-top: 4px; padding: 0 13px 0 11px; background: linear-gradient(#3fb8f8, #1391ea 15%, #129af0 80%, #0f70c4); border-left: 1px solid #0c4a90; }
    .tray .hide { position: absolute; left: -10px; top: 6px; width: 19px; height: 19px; border-radius: 50%; background: radial-gradient(#5cc4ff, #1c6fe0); border: 1px solid #8fd2ff; }
    .tray time { margin-left: auto; }
  `;

  private menus(names: string[]) {
    return html`<nav class="menus">${names.map(n => html`<button>${n}</button>`)}</nav>`;
  }
  private glyphButton(label: string, art: Art) {
    return html`<button aria-label=${label}>${icon(16, 16, art)}</button>`;
  }
  private group(tools: Tool[], size: number, near = false) {
    return html`<div class=${classMap({ group: true, near, small: size === 27 })}>
      ${tools.map(t => html`<button aria-label=${t.label} class=${classMap({ on: !!t.on })}>
        ${icon(size, size, svg`${t.art}${t.more ? corner : null}`)}</button>`)}
    </div>`;
  }
  private field(label: string, value: string, dim = false) {
    return html`<span class="field"><input aria-label=${label} .value=${value} ?readonly=${dim}>
      ${icon(7, 10, svg`<path fill=${dim ? "#6d6e6b" : "#a5a6a3"} d="M3.500 0l3 4h-6zM3.500 10l3-4h-6z"/>`)}</span>`;
  }
  private select(label: string, value: string) {
    return html`<span class="pick"><select aria-label=${label}><option>${value}</option></select></span>`;
  }

  private ruler() {
    const step = 7.89;
    return html`<div class="ruler"><svg viewBox="0 0 723 22" aria-label="Linea temporale">
      ${Array.from({ length: 91 }, (_, i) => {
        const x = Math.round(5 + i * step) + 0.5;
        return svg`<path stroke="#bcbcba" d="M${x} ${i % 10 ? 17 : i ? 13 : 17}V21"/>`;
      })}
      ${Array.from({ length: 10 }, (_, i) => svg`<text x=${i ? 5 + i * 10 * step - 1 : 14} y="10" text-anchor="middle" font-size="11" fill="#c9c9c7">${i * 10}</text>`)}
      <path fill="#56e890" d="M1 0h9v15H1z"/>
    </svg></div>`;
  }

  render() {
    return html`
      <header class="title">
        ${icon(16, 16, c4d)}
        <h1>CINEMA 4D R14.041 Visualize (32 Bit) - [Disegno1.dxf *]</h1>
        <div class="wins">
          <button class="win" aria-label="Riduci">${icon(17, 17, svg`<path fill="#fff" d="M3 12h7v3H3z"/>`)}</button>
          <button class="win" aria-label="Ripristina">${icon(17, 17, svg`<path fill="none" stroke="#fff" stroke-width="1.500" d="M6 6V3h8v7h-3M3 7h8v7H3zM3 8h8"/>`)}</button>
          <button class="win close" aria-label="Chiudi">${icon(17, 17, svg`<path stroke="#fff" stroke-width="2.200" d="M3.500 3.500l10 10M13.500 3.500l-10 10"/>`)}</button>
        </div>
      </header>
      <div class="menubar">
        ${this.menus(["File", "Modifica", "Crea", "Selezione", "Strumenti", "Mesh", "Snap", "Animazione", "Simulazione", "Rendering", "Personaggio", "Plugin", "Script", "Finestre", "Aiuto"])}
        <div class="layout"><span>Layout:</span>${this.select("Layout", "Interfaccia di Avvio")}${this.glyphButton("Cerca comando", lens)}</div>
      </div>
      <main class="work">
        <div class="left">
          <div class="toolbar"><span class="grip tall"></span>
            ${topGroups.map(g => this.group(g.tools, 35, g.near))}</div>
          <div class="stage">
            <div class="rail"><span class="grip wide"></span>
              ${leftGroups.map(g => this.group(g.tools, 35, g.near))}
              <div class="brand"><b>MAXON</b><span>CINEMA 4D</span></div>
            </div>
            <div class="center">
              <div class="head"><span class="grip"></span>
                ${this.menus(["Viste", "Camere", "Mostra", "Opzioni", "Filtro", "Vista"])}
                <div class="tools">${viewGlyphs.map(([l, a]) => this.glyphButton(l, a))}</div>
              </div>
              <div class="view"><svg viewBox="41 113 802 680" preserveAspectRatio="xMidYMid slice" aria-label="Vista prospettica">${scene}</svg></div>
              <div class="line time"><span class="grip mid"></span>${this.ruler()}<span></span>${this.field("Fotogramma", "0 F")}</div>
              <div class="line play">
                <div class="line"><span class="grip mid"></span>
                  ${this.field("Inizio", "0 F")}
                  <div class="range"><span>${icon(8, 8, svg`<path fill="#ddd" d="M7 1v6L0 4z"/>`)}0 F</span><span>90 F${icon(8, 8, svg`<path fill="#ddd" d="M1 1v6l7-3z"/>`)}</span></div>
                  ${this.field("Fine", "90 F")}
                </div>
                ${playGroups.map(g => this.group(g, 27))}
                <div class="push">${this.group([film], 27)}</div>
              </div>
              <div class="lower">
                <section class="panel"><div class="head"><span class="grip"></span>${this.menus(["File", "Modifica", "Funzione", "Texture"])}</div></section>
                <section class="panel">
                  <div class="head"><span class="grip"></span><div class="dashes"><span>--</span><span>--</span><span>--</span></div></div>
                  <div class="coords">
                    ${[["X", "X", "H"], ["Y", "Y", "P"], ["Z", "Z", "B"]].map(r => r.map((l, i) => html`<span>${l}</span>${this.field(`${["Posizione", "Dimensione", "Rotazione"][i]} ${l}`, i < 2 ? "0 cm" : "0 °", true)}`))}
                    <span></span>${this.select("Sistema", "Assoluto")}<span></span>${this.select("Dimensione", "Scala")}<span></span><button class="apply">Applica</button>
                  </div>
                </section>
              </div>
            </div>
          </div>
          <div class="status"><span class="grip"></span><span>00:00:02</span></div>
        </div>
        <div class="right">
          <div class="dock objects">
            <section class="panel">
              <div class="head"><span class="grip"></span>${this.menus(["File", "Modifica", "Vista", "Oggetti", "Tag", "Segnalibri"])}
                <div class="tools">${this.glyphButton("Cerca", lens)}${this.glyphButton("Radice", house)}${this.glyphButton("Mostra", eye)}${this.glyphButton("Nuova finestra", plusBox)}</div></div>
              <div class="tree"><table aria-label="Oggetti"><colgroup><col class="c1"><col class="c2"><col></colgroup><tbody>
                ${rows.map(r => html`<tr>
                  <td><div class="node">${icon(r.depth ? 27 : 16, 20, branch(r))}${icon(17, 17, r.glyph)}<span class="name">${r.name}</span></div></td>
                  <td><div class="dots">${icon(40, 20, svg`<circle cx="10" cy="10" r="4.300" fill="#7c7d7a"/><circle cx="23" cy="6" r="2.500" fill=${r.green ? "#5ff0a0" : "#777875"}/><circle cx="23" cy="14" r="2.500" fill=${r.green ? "#5ff0a0" : "#777875"}/>${r.check ? svg`<path fill="none" stroke="#56e8a0" stroke-width="2" d="M29 10l3 3l6-8"/>` : null}`)}</div></td>
                  <td>${r.check ? icon(20, 18, svg`<circle cx="10" cy="9" r="7.500" fill="#8c9096"/><circle cx="10" cy="9" r="5.300" fill="#c5e0fb" stroke="#fff" stroke-width="1.300" stroke-dasharray="1.500 1"/>`) : null}</td>
                </tr>`)}</tbody></table></div>
            </section>
            <div class="tabs"><button class="tab on">Oggetti</button><button class="tab">Content Browser</button><button class="tab">Struttura</button></div>
          </div>
          <div class="dock attributes">
            <section class="panel">
              <div class="head"><span class="grip"></span>${this.menus(["Modo", "Modifica", "Dati Utente"])}
                <div class="tools">
                  ${this.glyphButton("Indietro", svg`<path fill="#161616" d="M15 2v12L1 8z"/>`)}
                  ${this.glyphButton("Avanti", svg`<path stroke="#5a5b58" stroke-width="1.500" d="M1 12l14-7"/>`)}
                  <span></span>${this.glyphButton("Su", svg`<path fill="#161616" d="M8 1l6 14l-6-3l-6 3z"/>`)}
                  <span></span>${this.glyphButton("Cerca attributo", lens)}
                  <span></span>${this.glyphButton("Blocca", svg`<path fill="none" stroke="#1d1d1d" stroke-width="1.300" d="M3 7h10v7H3zM5 7V4a3 3 0 0 1 6 0M8 9v3"/>`)}
                  ${this.glyphButton("Collega", svg`<circle cx="8" cy="5" r="2.500" fill="none" stroke="#1d1d1d" stroke-width="1.200"/><circle cx="8" cy="11.500" r="2.500" fill="none" stroke="#1d1d1d" stroke-width="1.200"/>`)}
                  ${this.glyphButton("Nuovo pannello", plusBox)}
                </div></div>
            </section>
            <div class="tabs"><button class="tab on">Attributi</button><button class="tab">Livelli</button></div>
          </div>
        </div>
      </main>
      <footer class="taskbar">
        <button class="start">${icon(20, 20, svg`<path fill="#f0622c" d="M3 4q4-3 7 0l-2 6q-3-2-6 0z"/><path fill="#8fd14a" d="M11 5q3 2 7-1l-2 6q-4 3-7 0z"/><path fill="#5f9cf2" d="M2 11q3-2 6 0l-2 6q-3-2-6 0z"/><path fill="#f8cf3c" d="M9 12q3 2 7 0l-2 6q-4 2-7 0z"/>`)}start</button>
        <span class="sep"></span>
        <div class="quick">${quick.map(([l, a]) => this.glyphButton(l, a))}</div>
        <button class="more" aria-label="Altri">»</button>
        <span class="sep"></span>
        <div class="tasks">${tasks.map(t => html`<button class=${classMap({ task: true, on: !!t.on })}>${icon(16, 16, t.art)}<span>${t.name}</span></button>`)}</div>
        <div class="tray">
          <button class="hide" aria-label="Nascondi icone">${icon(15, 15, svg`<path fill="none" stroke="#fff" stroke-width="2" d="M9 4L5.500 7.500L9 11"/>`)}</button>
          ${icon(14, 16, svg`<path fill="#bcd4f4" stroke="#5a7ec0" d="M5 2h8v7H5zM1 6h8v7H1z"/>`)}
          <span></span>${icon(16, 16, svg`<path fill="#fff" d="M1 0h14v16H1z"/><path fill="none" stroke="#111" stroke-width="1.500" d="M3 2l4 5l-4 7M13 2L8 8l4 6M6 2l3 3M10 10l-3 4"/><path stroke="#b03a2c" d="M5 8l6 1"/>`)}
          ${icon(16, 16, svg`<circle cx="6" cy="7" r="5.500" fill="#a9adb3" stroke="#565a60"/><circle cx="6" cy="7" r="2" fill="#494d52"/><path fill="none" stroke="#d7e6f6" d="M11 13q3-3 2-7M13 15q4-4 2-9"/>`)}
          ${icon(16, 16, svg`<path fill="#3fae3c" d="M2 5l6-4v3h4v5H8v2z"/><path fill="#a9aeb6" stroke="#555" d="M7 10l5-1l3 4l-6 2z"/>`)}
          <time>11.33</time>
        </div>
      </footer>`;
  }
}
